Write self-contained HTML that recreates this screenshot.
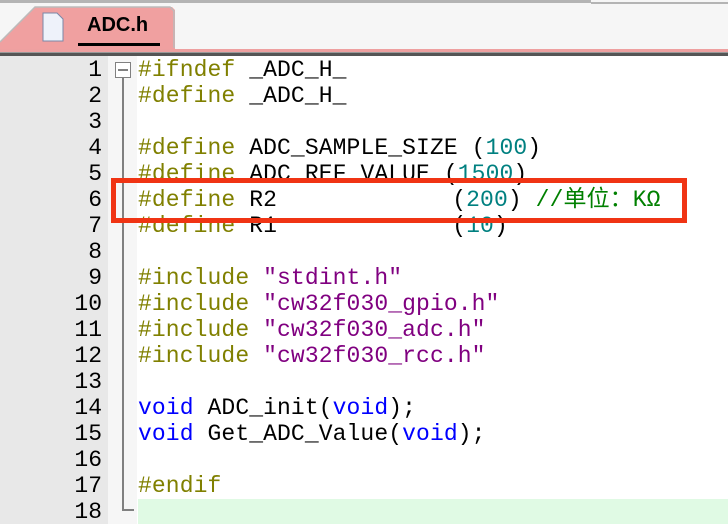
<!DOCTYPE html>
<html><head><meta charset="utf-8"><style>
body{margin:0;width:728px;height:524px;overflow:hidden;background:#fff;position:relative;font-family:"Liberation Mono","Noto Sans CJK SC",monospace}
.abs{position:absolute}
.code{position:absolute;left:138px;top:57px;font-size:23px;line-height:26px;white-space:pre;color:#000;letter-spacing:0.1px}
.nums{position:absolute;left:0;width:102px;top:57px;font-size:23px;line-height:26px;text-align:right;color:#000}
.p{color:#808000}.n{color:#008080}.s{color:#800080}.k{color:#0000ff}.c{color:#008000}
.pad{display:inline-block;width:203px}
</style></head><body>
<div class="abs" style="left:0;top:0;width:728px;height:49px;background:#f6f6f6"></div>
<div class="abs" style="left:0;top:0;width:591px;height:3px;background:#b4b4b4"></div>
<div class="abs" style="left:591px;top:2px;width:137px;height:2px;background:#b4b4b4"></div>
<svg class="abs" style="left:0;top:0" width="180" height="50">
<polygon points="0,42 35,7 172,7 175,10 175,50 0,50" fill="#f0a0a0"/>
<polyline points="0,42 35,7 170,7 174,11 174,48" fill="none" stroke="#bbb" stroke-width="1.5"/>
<path d="M43 13h14l6 6v22h-20z" fill="#eef2fa" stroke="#7a88a8"/>
<rect x="78" y="43" width="82" height="3" fill="#000"/>
</svg>
<div class="abs" style="left:87px;top:14px;font:bold 20px 'Liberation Sans',sans-serif;color:#000">ADC.h</div>
<div class="abs" style="left:0;top:49px;width:728px;height:3px;background:#eea0a0"></div>
<div class="abs" style="left:0;top:52px;width:728px;height:1px;background:#999"></div>
<div class="abs" style="left:0;top:53px;width:728px;height:3px;background:#555"></div>
<div class="abs" style="left:0;top:56px;width:108px;height:468px;background:#e8e8e8"></div>
<div class="abs" style="left:108px;top:56px;width:29px;height:468px;background:#f6f6f6"></div>
<div class="abs" style="left:138px;top:499px;width:590px;height:25px;background:#e0fae4"></div>
<div class="abs" style="left:122px;top:78px;width:2px;height:432px;background:#808080"></div>
<div class="abs" style="left:122px;top:509px;width:12px;height:2px;background:#808080"></div>
<div class="abs" style="left:115px;top:62px;width:14px;height:14px;border:1px solid #808080;background:#fff"></div>
<div class="abs" style="left:118px;top:69px;width:10px;height:2px;background:#808080"></div>
<div class="nums">1<br>2<br>3<br>4<br>5<br>6<br>7<br>8<br>9<br>10<br>11<br>12<br>13<br>14<br>15<br>16<br>17<br>18</div>
<div class="code"><span class="p">#ifndef</span> _ADC_H_
<span class="p">#define</span> _ADC_H_

<span class="p">#define</span> ADC_SAMPLE_SIZE (<span class="n">100</span>)
<span class="p">#define</span> ADC_REF_VALUE (<span class="n">1500</span>)
<span class="p">#define</span> <span class="pad">R2</span>(<span class="n">200</span>) <span class="c">//单位：KΩ</span>
<span class="p">#define</span> <span class="pad">R1</span>(<span class="n">10</span>)

<span class="p">#include</span> <span class="s">"stdint.h"</span>
<span class="p">#include</span> <span class="s">"cw32f030_gpio.h"</span>
<span class="p">#include</span> <span class="s">"cw32f030_adc.h"</span>
<span class="p">#include</span> <span class="s">"cw32f030_rcc.h"</span>

<span class="k">void</span> ADC_init(<span class="k">void</span>);
<span class="k">void</span> Get_ADC_Value(<span class="k">void</span>);

<span class="p">#endif</span>
</div>
<div class="abs" style="left:111px;top:178px;width:566px;height:35px;border:5px solid #f03414"></div>
</body></html>
